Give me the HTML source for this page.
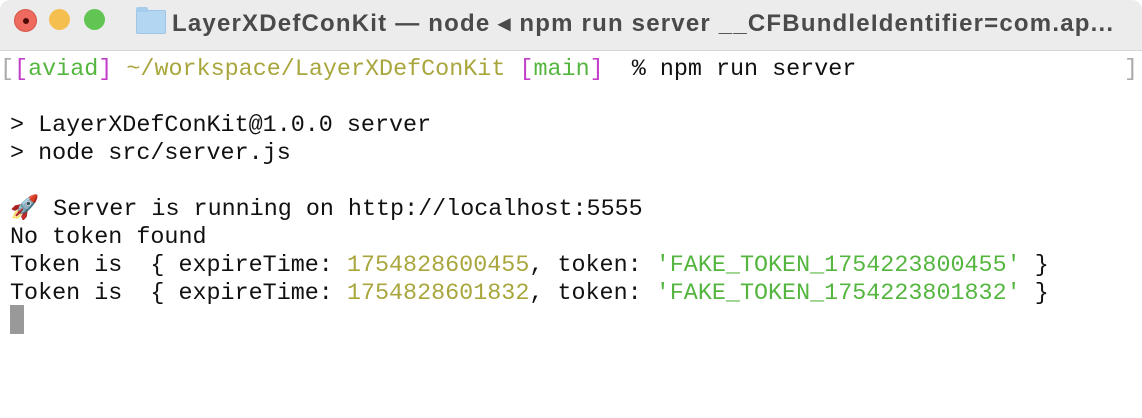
<!DOCTYPE html>
<html><head><meta charset="utf-8"><style>
html,body{margin:0;padding:0;width:1142px;height:418px;overflow:hidden;background:#fff}
.title{position:absolute;left:0;top:0;width:1142px;height:50px;background:#ececec;border-bottom:1px solid #d6d6d6;border-radius:10px 10px 0 0}
.dot{position:absolute;top:9px;width:21px;height:21px;border-radius:50%}
.tt{position:absolute;left:172px;top:9px;font:bold 24px "Liberation Sans",sans-serif;color:#4a4a4a;white-space:nowrap;letter-spacing:1.2px}
.folder{position:absolute;left:136px;top:10px;width:28px;height:22px;background:#b3d7f3;border-radius:2px;border:1px solid #9fc6e6}
.folder:before{content:"";position:absolute;left:-1px;top:-4px;width:12px;height:5px;background:#a6cdee;border-radius:2px 2px 0 0}
.l{position:absolute;left:10px;font:23.4px "Liberation Mono",monospace;white-space:pre;color:#111;line-height:28px}
.y{color:#a8a63c}.g{color:#54b63f}.m{color:#c33fc9}.gr{color:#aaa}
</style></head><body>
<div class="title">
<div class="dot" style="left:14px;background:#ee6a5e;border:0.5px solid #d45548"><div style="position:absolute;left:8px;top:8px;width:6px;height:6px;border-radius:50%;background:#4d0c08"></div></div>
<div class="dot" style="left:49px;background:#f5bf4f"></div>
<div class="dot" style="left:84px;background:#61c554"></div>
<div class="folder"></div>
<div class="tt">LayerXDefConKit — node ◂ npm run server __CFBundleIdentifier=com.ap...</div>
</div>
<div class="l" style="left:0;top:56px"><span class="gr">[</span><span class="m">[</span><span class="g">aviad</span><span class="m">]</span> <span class="y">~/workspace/LayerXDefConKit</span> <span class="m">[</span><span class="g">main</span><span class="m">]</span>  % npm run server</div>
<div class="l gr" style="left:1124px;top:56px">]</div>
<div class="l" style="top:112px">&gt; LayerXDefConKit@1.0.0 server</div>
<div class="l" style="top:140px">&gt; node src/server.js</div>
<div class="l" style="top:196px">🚀 Server is running on http://localhost:5555</div>
<div class="l" style="top:224px">No token found</div>
<div class="l" style="top:252px">Token is  { expireTime: <span class="y">1754828600455</span>, token: <span class="g">'FAKE_TOKEN_1754223800455'</span> }</div>
<div class="l" style="top:280px">Token is  { expireTime: <span class="y">1754828601832</span>, token: <span class="g">'FAKE_TOKEN_1754223801832'</span> }</div>
<div style="position:absolute;left:10px;top:305px;width:14px;height:29px;background:#999"></div>
</body></html>
